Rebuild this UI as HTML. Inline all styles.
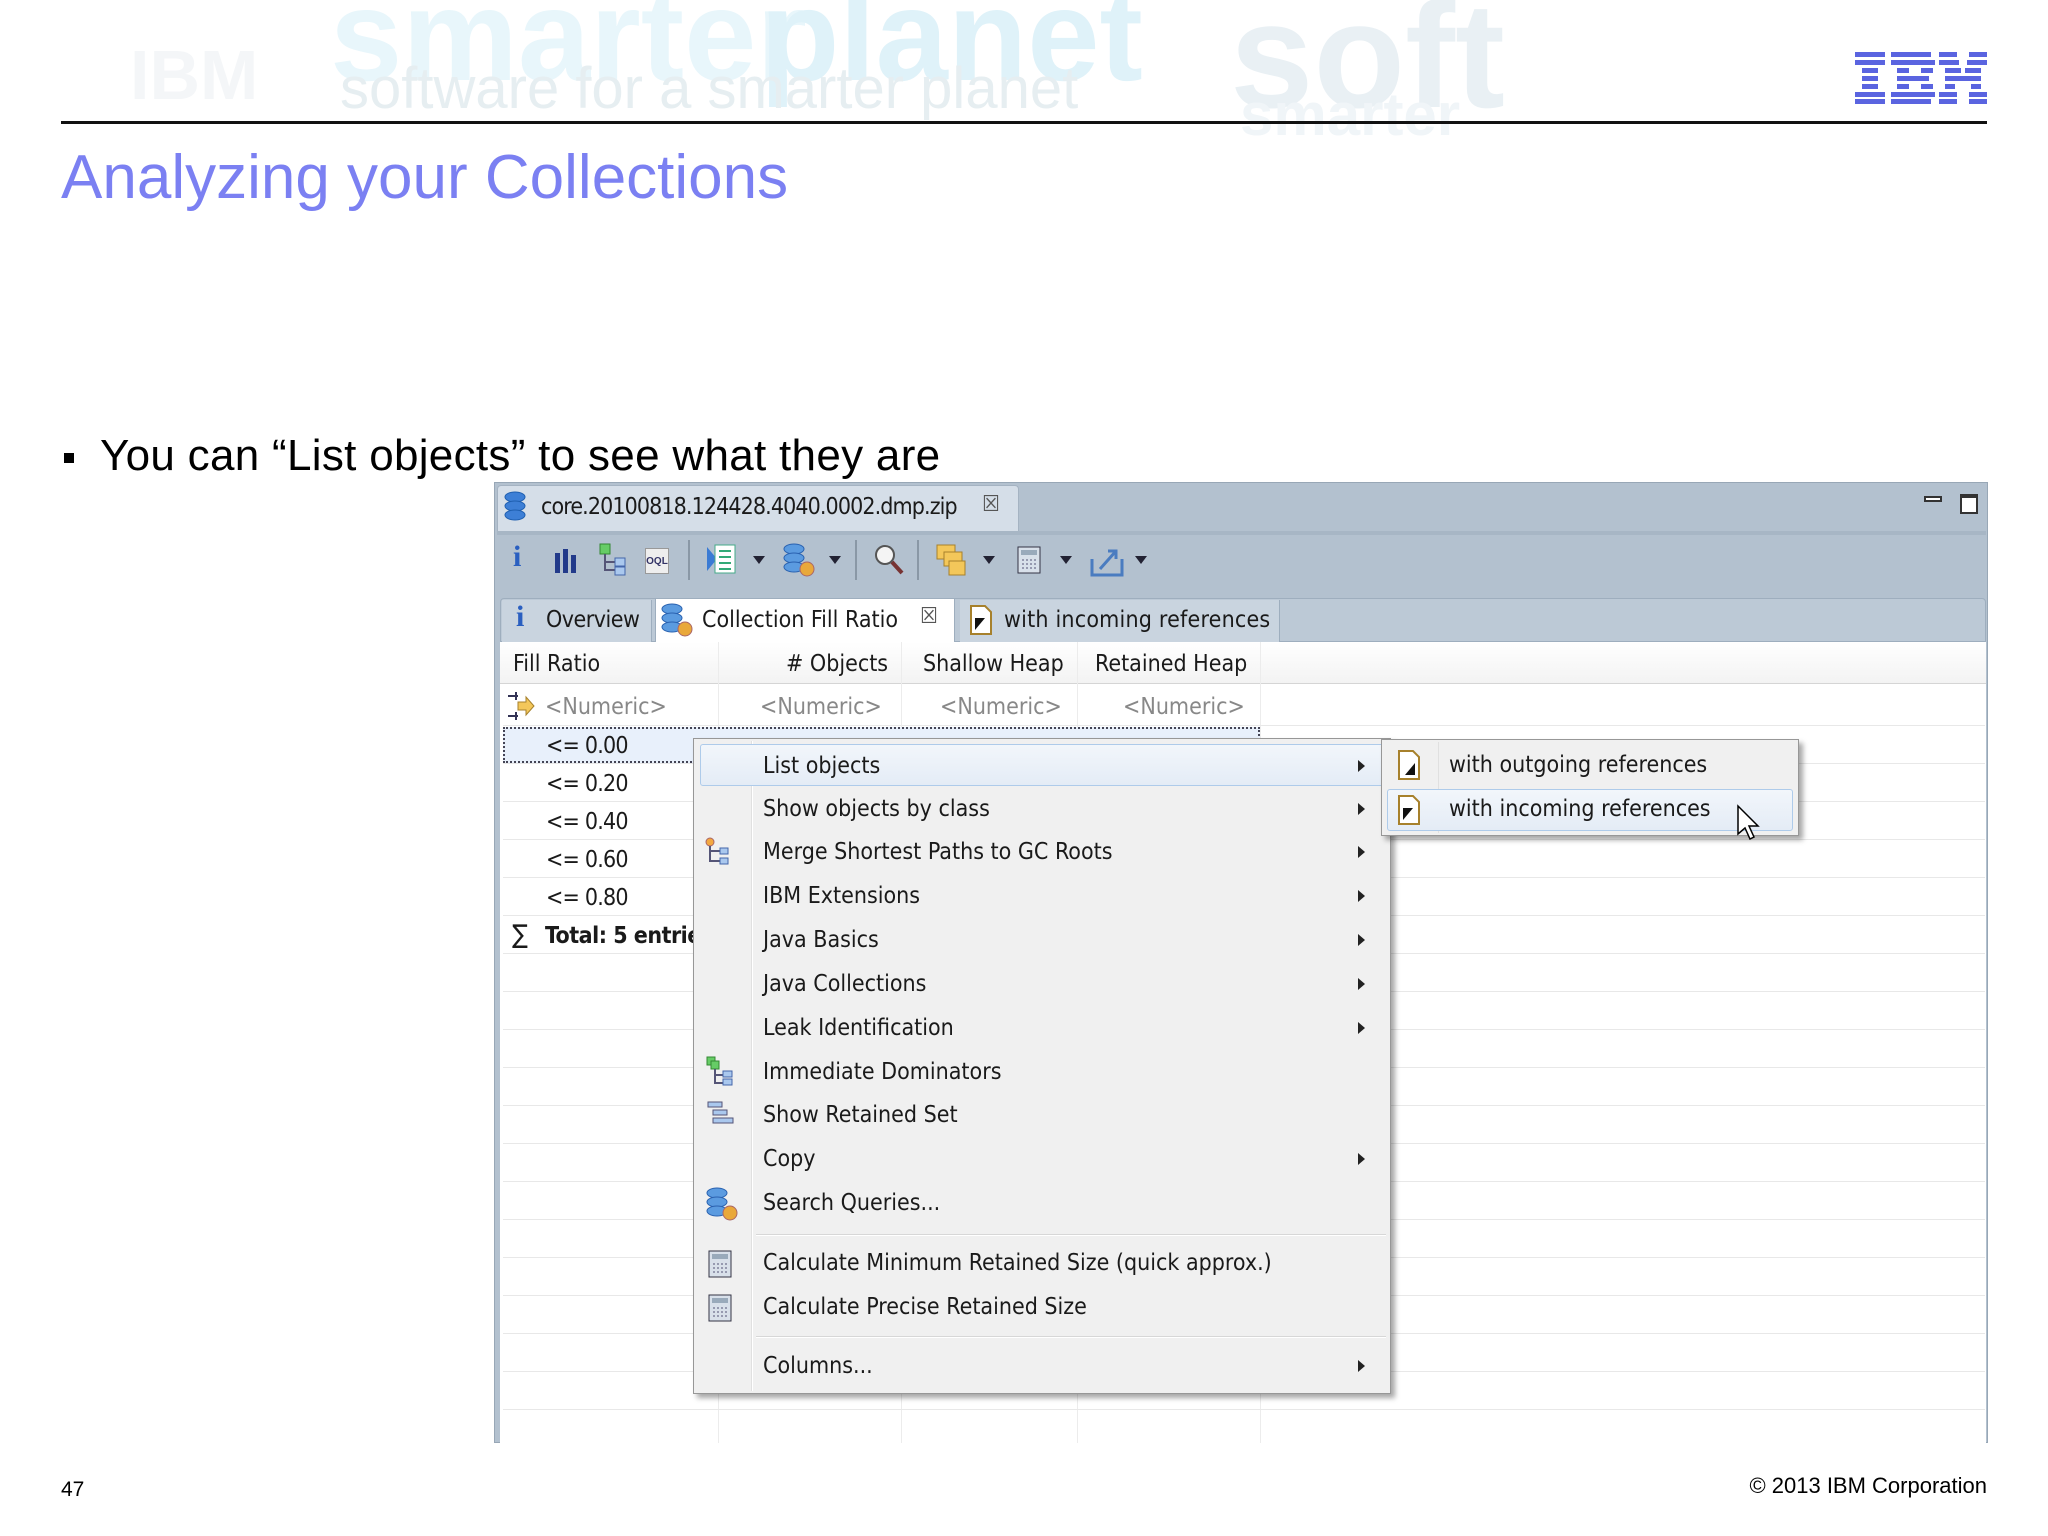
<!DOCTYPE html>
<html><head><meta charset="utf-8"><style>
*{margin:0;padding:0;box-sizing:border-box}
body{width:2048px;height:1536px;background:#fff;position:relative;overflow:hidden;font-family:"Liberation Sans",sans-serif}
.a{position:absolute}
.wm{position:absolute;font-family:"Liberation Sans",sans-serif;font-weight:bold;white-space:nowrap;line-height:1}
.ui{font-family:"DejaVu Sans Condensed","Liberation Sans",sans-serif;color:#1a1a1a;white-space:nowrap}
.mi{position:absolute;left:763px;font-size:23px;transform:translateY(-50%)}
.ar{position:absolute;left:1358px;width:0;height:0;border-top:6px solid transparent;border-bottom:6px solid transparent;border-left:7px solid #222;transform:translateY(-50%)}
.row{position:absolute;left:503px;width:1482px;height:1px;background:#e8e8e8}
.col{position:absolute;width:1px;background:#ececec}
</style></head><body>
<!-- watermark header -->
<div class="wm" style="left:330px;top:-30px;font-size:130px;color:#e8f6fb">smarter</div>
<div class="wm" style="left:760px;top:-30px;font-size:130px;color:#dff2f9">planet</div>
<div class="wm" style="left:1230px;top:-20px;font-size:150px;color:#e9f0f4">soft</div>
<div class="wm" style="left:340px;top:60px;font-size:58px;font-weight:normal;color:#e6eef1">software for a smarter planet</div>
<div class="wm" style="left:1240px;top:85px;font-size:60px;color:#f0f5f8">smarter</div>
<div class="wm" style="left:130px;top:40px;font-size:70px;color:#f4f6f8">IBM</div>
<!-- IBM logo -->
<svg class="a" style="left:1855px;top:52px" width="132" height="52" viewBox="0 0 132 52">
<g fill="#5a64e0">
<rect x="0" y="0" width="30" height="5"/><rect x="0" y="8" width="30" height="5"/><rect x="7" y="16" width="16" height="5"/><rect x="7" y="24" width="16" height="5"/><rect x="7" y="32" width="16" height="5"/><rect x="0" y="40" width="30" height="5"/><rect x="0" y="47" width="30" height="5"/>
<rect x="36" y="0" width="40" height="5"/><rect x="36" y="8" width="44" height="5"/><rect x="42" y="16" width="12" height="5"/><rect x="66" y="16" width="12" height="5"/><rect x="42" y="24" width="32" height="5"/><rect x="42" y="32" width="12" height="5"/><rect x="66" y="32" width="12" height="5"/><rect x="36" y="40" width="44" height="5"/><rect x="36" y="47" width="40" height="5"/>
<rect x="84" y="0" width="18" height="5"/><rect x="114" y="0" width="18" height="5"/><rect x="84" y="8" width="20" height="5"/><rect x="112" y="8" width="20" height="5"/><rect x="90" y="16" width="16" height="5"/><rect x="110" y="16" width="16" height="5"/><rect x="90" y="24" width="36" height="5"/><rect x="90" y="32" width="10" height="5"/><rect x="116" y="32" width="10" height="5"/><rect x="84" y="40" width="18" height="5"/><rect x="114" y="40" width="18" height="5"/><rect x="84" y="47" width="18" height="5"/><rect x="114" y="47" width="18" height="5"/>
</g></svg>
<div class="a" style="left:61px;top:121px;width:1926px;height:3px;background:#111"></div>
<div class="a" style="left:61px;top:142px;font-size:62px;color:#7b80f2;white-space:nowrap">Analyzing your Collections</div>
<div class="a" style="left:64px;top:453px;width:10px;height:10px;background:#000"></div>
<div class="a" style="left:100px;top:431px;font-size:44px;color:#000;white-space:nowrap;letter-spacing:0.3px">You can “List objects” to see what they are</div>

<!-- window -->
<div class="a" style="left:494px;top:482px;width:1494px;height:961px;background:#b3c1cf;border:1px solid #98a7b6"></div>
<div class="a" style="left:497px;top:485px;width:522px;height:46px;background:#d5dee8;border:1px solid #a5b3c2;border-bottom:none;border-radius:4px 4px 0 0"></div>
<svg class="a" style="left:503px;top:490px" width="24" height="34"><g fill="#3d7fd6" stroke="#1f5fb0"><ellipse cx="12" cy="7" rx="10" ry="5"/><ellipse cx="12" cy="16" rx="10" ry="5"/><ellipse cx="12" cy="25" rx="10" ry="5"/></g></svg>
<div class="a ui" style="left:541px;top:494px;font-size:23px;letter-spacing:-0.9px">core.20100818.124428.4040.0002.dmp.zip</div>
<div class="a ui" style="left:982px;top:492px;font-size:22px;color:#555">☒</div>
<div class="a" style="left:1924px;top:496px;width:18px;height:6px;border:2px solid #333;background:#fff"></div>
<div class="a" style="left:1960px;top:494px;width:18px;height:20px;border:2px solid #333;border-top-width:4px;background:#fff"></div>
<div class="a" style="left:497px;top:531px;width:1489px;height:4px;background:#a7b6c5"></div>
<!-- toolbar icons -->
<div class="a" style="left:513px;top:540px;font:bold 30px 'Liberation Serif',serif;color:#2a5fc0">i</div>
<svg class="a" style="left:554px;top:547px" width="24" height="26"><g fill="#223a8a"><rect x="1" y="6" width="5" height="20"/><rect x="9" y="2" width="5" height="24"/><rect x="17" y="8" width="5" height="18"/></g></svg>
<svg class="a" style="left:598px;top:542px" width="30" height="34"><rect x="2" y="2" width="10" height="10" fill="#6c6" stroke="#383"/><path d="M7 12v16h10M7 20h10" stroke="#557" fill="none" stroke-width="2"/><rect x="17" y="16" width="10" height="8" fill="#aac8ee" stroke="#46a"/><rect x="17" y="25" width="10" height="8" fill="#aac8ee" stroke="#46a"/></svg>
<div class="a" style="left:645px;top:548px;width:24px;height:26px;background:#eee;border:1px solid #999;font:bold 10px 'Liberation Sans';color:#336;padding-top:7px;text-align:center">OQL</div>
<div class="a" style="left:688px;top:540px;width:2px;height:40px;background:#8a98a6"></div>
<svg class="a" style="left:705px;top:543px" width="32" height="32"><path d="M2 4v24l10-12z" fill="#3b7bd4"/><rect x="10" y="2" width="20" height="28" fill="#fff" stroke="#4a8"/><path d="M14 8h12M14 14h12M14 20h12M14 26h12" stroke="#3a7" stroke-width="2"/></svg>
<div class="a" style="left:753px;top:556px;border-left:6px solid transparent;border-right:6px solid transparent;border-top:8px solid #223"></div>
<svg class="a" style="left:782px;top:542px" width="34" height="36"><g fill="#5b9be0" stroke="#2a62b0"><ellipse cx="12" cy="7" rx="10" ry="5"/><ellipse cx="12" cy="16" rx="10" ry="5"/><ellipse cx="12" cy="25" rx="10" ry="5"/></g><circle cx="25" cy="27" r="7" fill="#e9a83a" stroke="#a66"/></svg>
<div class="a" style="left:829px;top:556px;border-left:6px solid transparent;border-right:6px solid transparent;border-top:8px solid #223"></div>
<div class="a" style="left:855px;top:540px;width:2px;height:40px;background:#8a98a6"></div>
<svg class="a" style="left:873px;top:543px" width="32" height="34"><circle cx="12" cy="12" r="9" fill="#f4f4f4" stroke="#555" stroke-width="2"/><path d="M19 19l10 11" stroke="#733" stroke-width="4"/></svg>
<div class="a" style="left:917px;top:540px;width:2px;height:40px;background:#8a98a6"></div>
<svg class="a" style="left:935px;top:543px" width="34" height="34"><rect x="2" y="2" width="18" height="14" fill="#f3c75a" stroke="#a7812c"/><rect x="9" y="9" width="18" height="14" fill="#f3c75a" stroke="#a7812c"/><rect x="14" y="18" width="16" height="14" fill="#f3c75a" stroke="#a7812c"/></svg>
<div class="a" style="left:983px;top:556px;border-left:6px solid transparent;border-right:6px solid transparent;border-top:8px solid #223"></div>
<svg class="a" style="left:1017px;top:546px" width="24" height="28"><rect x="1" y="1" width="22" height="26" fill="#d8e0ea" stroke="#334"/><rect x="4" y="4" width="16" height="5" fill="#9ab"/><path d="M5 14h14M5 18h14M5 22h14" stroke="#557" stroke-dasharray="2 2"/></svg>
<div class="a" style="left:1060px;top:556px;border-left:6px solid transparent;border-right:6px solid transparent;border-top:8px solid #223"></div>
<svg class="a" style="left:1090px;top:543px" width="36" height="34"><path d="M2 16v16h30V16" fill="none" stroke="#4a7cc0" stroke-width="3"/><path d="M10 26l16-18M18 8h8v8" fill="none" stroke="#4a7cc0" stroke-width="3"/></svg>
<div class="a" style="left:1135px;top:556px;border-left:6px solid transparent;border-right:6px solid transparent;border-top:8px solid #223"></div>
<!-- inner tab row -->
<div class="a" style="left:500px;top:598px;width:1486px;height:44px;background:#bcc9d6;border:1px solid #9eaebe;border-radius:4px 4px 0 0"></div>
<div class="a" style="left:502px;top:600px;width:150px;height:42px;background:#c9d4df;border-right:1px solid #9eaebe"></div>
<div class="a" style="left:516px;top:600px;font:bold 30px 'Liberation Serif',serif;color:#2a5fc0">i</div>
<div class="a ui" style="left:546px;top:607px;font-size:23px;letter-spacing:-0.5px">Overview</div>
<div class="a" style="left:655px;top:598px;width:300px;height:46px;background:#fff;border:1px solid #9eaebe;border-bottom:none"></div>
<svg class="a" style="left:660px;top:602px" width="34" height="36"><g fill="#5b9be0" stroke="#2a62b0"><ellipse cx="12" cy="7" rx="10" ry="5"/><ellipse cx="12" cy="16" rx="10" ry="5"/><ellipse cx="12" cy="25" rx="10" ry="5"/></g><circle cx="25" cy="27" r="7" fill="#e9a83a" stroke="#a66"/></svg>
<div class="a ui" style="left:702px;top:607px;font-size:23px">Collection Fill Ratio</div>
<div class="a ui" style="left:920px;top:604px;font-size:22px;color:#555">☒</div>
<div class="a" style="left:960px;top:600px;width:320px;height:42px;background:#c9d4df;border-right:1px solid #9eaebe"></div>
<svg class="a" style="left:970px;top:605px" width="22" height="30"><path d="M1 1h14l6 6v22H1z" fill="#fff" stroke="#a7812c" stroke-width="2"/><path d="M5 13h10L5 25z" fill="#111"/></svg>
<div class="a ui" style="left:1004px;top:607px;font-size:23px;letter-spacing:0.2px">with incoming references</div>
<!-- table area -->
<div class="a" style="left:500px;top:642px;width:1486px;height:801px;background:#fff"></div>
<div class="a" style="left:500px;top:642px;width:1486px;height:42px;background:linear-gradient(#fff,#f3f3f3);border-bottom:1px solid #d5d5d5"></div>
<div class="a ui" style="left:513px;top:651px;font-size:23px">Fill Ratio</div>
<div class="a ui" style="left:786px;top:651px;font-size:23px"># Objects</div>
<div class="a ui" style="left:923px;top:651px;font-size:23px">Shallow Heap</div>
<div class="a ui" style="left:1095px;top:651px;font-size:23px">Retained Heap</div>
<div class="col" style="left:718px;top:642px;height:801px"></div>
<div class="col" style="left:901px;top:642px;height:801px"></div>
<div class="col" style="left:1077px;top:642px;height:801px"></div>
<div class="col" style="left:1260px;top:642px;height:801px"></div>
<svg class="a" style="left:506px;top:690px" width="30" height="32"><path d="M2 6h10M10 2v8M2 26h10M10 22v8" stroke="#335" stroke-width="2"/><path d="M12 12h8v-5l8 9-8 9v-5h-8z" fill="#f3c75a" stroke="#a7812c"/></svg>
<div class="a ui" style="left:545px;top:694px;font-size:23px;color:#888">&lt;Numeric&gt;</div>
<div class="a ui" style="left:760px;top:694px;font-size:23px;color:#888">&lt;Numeric&gt;</div>
<div class="a ui" style="left:940px;top:694px;font-size:23px;color:#888">&lt;Numeric&gt;</div>
<div class="a ui" style="left:1123px;top:694px;font-size:23px;color:#888">&lt;Numeric&gt;</div>
<div class="row" style="top:725px"></div>
<div class="a" style="left:503px;top:727px;width:757px;height:36px;border:2px dotted #445;background:#e8f0fb"></div>
<div class="a ui" style="left:546px;top:733px;font-size:23px;letter-spacing:-0.8px">&lt;= 0.00</div>
<div class="a ui" style="left:546px;top:771px;font-size:23px;letter-spacing:-0.8px">&lt;= 0.20</div>
<div class="a ui" style="left:546px;top:809px;font-size:23px;letter-spacing:-0.8px">&lt;= 0.40</div>
<div class="a ui" style="left:546px;top:847px;font-size:23px;letter-spacing:-0.8px">&lt;= 0.60</div>
<div class="a ui" style="left:546px;top:885px;font-size:23px;letter-spacing:-0.8px">&lt;= 0.80</div>
<div class="a ui" style="left:512px;top:920px;font-size:26px">∑</div>
<div class="a ui" style="left:545px;top:923px;font-size:23px;font-weight:bold;letter-spacing:-0.5px">Total: 5 entries</div>
<div class="row" style="top:763px"></div><div class="row" style="top:801px"></div><div class="row" style="top:839px"></div><div class="row" style="top:877px"></div><div class="row" style="top:915px"></div><div class="row" style="top:953px"></div><div class="row" style="top:991px"></div><div class="row" style="top:1029px"></div><div class="row" style="top:1067px"></div><div class="row" style="top:1105px"></div><div class="row" style="top:1143px"></div><div class="row" style="top:1181px"></div><div class="row" style="top:1219px"></div><div class="row" style="top:1257px"></div><div class="row" style="top:1295px"></div><div class="row" style="top:1333px"></div><div class="row" style="top:1371px"></div><div class="row" style="top:1409px"></div>
<div class="a" style="left:494px;top:1443px;width:1494px;height:2px;background:#fff"></div>

<!-- context menu -->
<div class="a" style="left:693px;top:738px;width:698px;height:656px;background:#f0f0f0;border:1px solid #979797;box-shadow:4px 4px 5px rgba(0,0,0,.35)"></div>
<div class="a" style="left:751px;top:741px;width:1px;height:650px;background:#e0e0e0"></div>
<div class="a" style="left:752px;top:741px;width:1px;height:650px;background:#fff"></div>
<div class="a" style="left:700px;top:744px;width:685px;height:42px;background:linear-gradient(#f2f6fb,#e4ecf6);border:1px solid #aecbea;border-radius:3px"></div>
<div class="mi ui" style="top:766px">List objects</div><div class="ar" style="top:766px"></div>
<div class="mi ui" style="top:809px">Show objects by class</div><div class="ar" style="top:809px"></div>
<svg class="a" style="left:705px;top:837px" width="30" height="30"><circle cx="5" cy="5" r="4" fill="#f3a840" stroke="#a66"/><path d="M5 9v16M5 14h10M5 24h10" stroke="#557" fill="none" stroke-width="2"/><rect x="15" y="11" width="8" height="6" fill="#aac8ee" stroke="#46a"/><rect x="15" y="21" width="8" height="6" fill="#aac8ee" stroke="#46a"/></svg>
<div class="mi ui" style="top:852px">Merge Shortest Paths to GC Roots</div><div class="ar" style="top:852px"></div>
<div class="mi ui" style="top:896px">IBM Extensions</div><div class="ar" style="top:896px"></div>
<div class="mi ui" style="top:940px">Java Basics</div><div class="ar" style="top:940px"></div>
<div class="mi ui" style="top:984px">Java Collections</div><div class="ar" style="top:984px"></div>
<div class="mi ui" style="top:1028px">Leak Identification</div><div class="ar" style="top:1028px"></div>
<svg class="a" style="left:705px;top:1055px" width="32" height="32"><rect x="2" y="2" width="8" height="8" fill="#6c6" stroke="#383"/><rect x="6" y="6" width="8" height="8" fill="#6c6" stroke="#383"/><path d="M10 14v14h8M10 20h8" stroke="#557" fill="none" stroke-width="2"/><rect x="18" y="16" width="9" height="6" fill="#aac8ee" stroke="#46a"/><rect x="18" y="24" width="9" height="6" fill="#aac8ee" stroke="#46a"/></svg>
<div class="mi ui" style="top:1072px">Immediate Dominators</div>
<svg class="a" style="left:705px;top:1100px" width="32" height="30"><g fill="#aac8ee" stroke="#557"><rect x="3" y="2" width="14" height="5"/><rect x="8" y="10" width="14" height="5"/><rect x="8" y="18" width="20" height="5"/></g></svg>
<div class="mi ui" style="top:1115px">Show Retained Set</div>
<div class="mi ui" style="top:1159px">Copy</div><div class="ar" style="top:1159px"></div>
<svg class="a" style="left:705px;top:1186px" width="34" height="36"><g fill="#5b9be0" stroke="#2a62b0"><ellipse cx="12" cy="7" rx="10" ry="5"/><ellipse cx="12" cy="16" rx="10" ry="5"/><ellipse cx="12" cy="25" rx="10" ry="5"/></g><circle cx="25" cy="27" r="7" fill="#e9a83a" stroke="#a66"/></svg>
<div class="mi ui" style="top:1203px">Search Queries...</div>
<div class="a" style="left:756px;top:1234px;width:630px;height:1px;background:#d7d7d7"></div><div class="a" style="left:756px;top:1235px;width:630px;height:1px;background:#fff"></div>
<svg class="a" style="left:708px;top:1250px" width="24" height="28"><rect x="1" y="1" width="22" height="26" fill="#d8e0ea" stroke="#334"/><rect x="4" y="4" width="16" height="5" fill="#9ab"/><path d="M5 14h14M5 18h14M5 22h14" stroke="#557" stroke-dasharray="2 2"/></svg>
<div class="mi ui" style="top:1263px">Calculate Minimum Retained Size (quick approx.)</div>
<svg class="a" style="left:708px;top:1294px" width="24" height="28"><rect x="1" y="1" width="22" height="26" fill="#d8e0ea" stroke="#334"/><rect x="4" y="4" width="16" height="5" fill="#9ab"/><path d="M5 14h14M5 18h14M5 22h14" stroke="#557" stroke-dasharray="2 2"/></svg>
<div class="mi ui" style="top:1307px">Calculate Precise Retained Size</div>
<div class="a" style="left:756px;top:1336px;width:630px;height:1px;background:#d7d7d7"></div><div class="a" style="left:756px;top:1337px;width:630px;height:1px;background:#fff"></div>
<div class="mi ui" style="top:1366px">Columns...</div><div class="ar" style="top:1366px"></div>

<!-- submenu -->
<div class="a" style="left:1381px;top:739px;width:418px;height:97px;background:#f0f0f0;border:1px solid #979797;box-shadow:4px 4px 5px rgba(0,0,0,.35)"></div>
<div class="a" style="left:1438px;top:742px;width:1px;height:91px;background:#e0e0e0"></div>
<div class="a" style="left:1387px;top:789px;width:406px;height:42px;background:linear-gradient(#f2f6fb,#e4ecf6);border:1px solid #aecbea;border-radius:3px"></div>
<svg class="a" style="left:1398px;top:750px" width="22" height="30"><path d="M1 1h14l6 6v22H1z" fill="#fff" stroke="#a7812c" stroke-width="2"/><path d="M17 13v12H7z" fill="#111"/></svg>
<div class="a ui" style="left:1449px;top:752px;font-size:23px">with outgoing references</div>
<svg class="a" style="left:1398px;top:795px" width="22" height="30"><path d="M1 1h14l6 6v22H1z" fill="#fff" stroke="#a7812c" stroke-width="2"/><path d="M5 13h10L5 25z" fill="#111"/></svg>
<div class="a ui" style="left:1449px;top:796px;font-size:23px">with incoming references</div>
<svg class="a" style="left:1736px;top:804px" width="26" height="38"><path d="M2 2v28l7-6 5 11 4-2-5-11h9z" fill="#fff" stroke="#000" stroke-width="1.5"/></svg>

<div class="a" style="left:61px;top:1478px;font-size:21px;color:#000">47</div>
<div class="a" style="left:1740px;top:1473px;width:247px;text-align:right;font-size:22px;color:#000;white-space:nowrap">© 2013 IBM Corporation</div>
</body></html>
